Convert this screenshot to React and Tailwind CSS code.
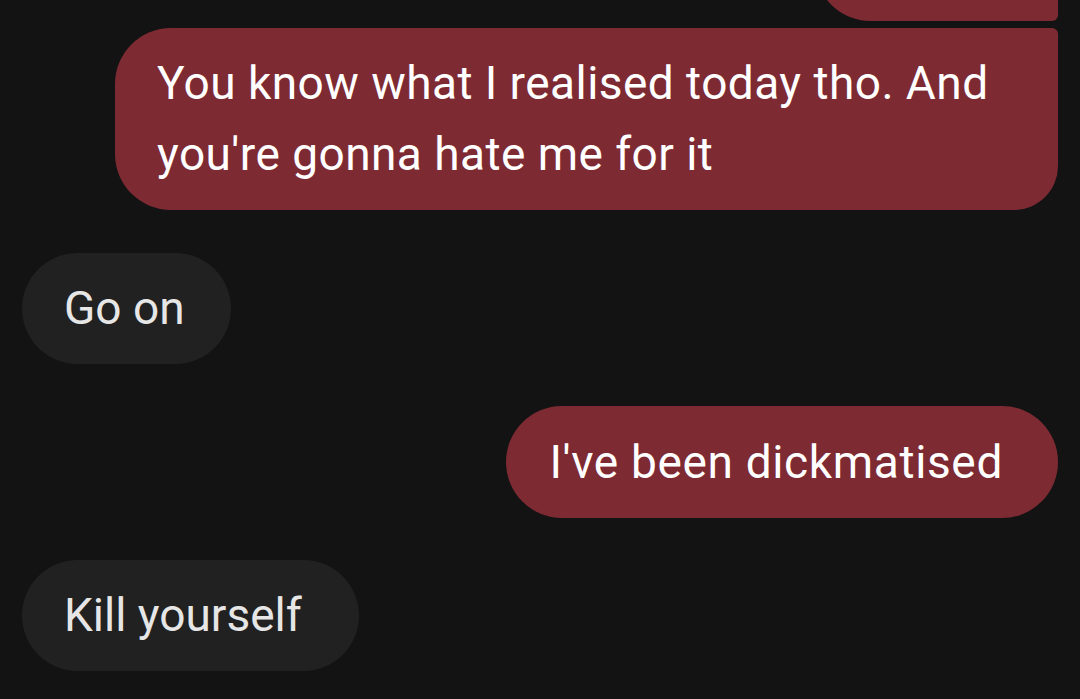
export default function App() {
  const font = { fontFamily: "Roboto, 'Noto Sans', sans-serif" };
  return (
    <div className="w-[1080px] h-[699px] overflow-hidden bg-[#131313]" style={font}>
      <div className="flex flex-col px-[22px]">
        <div className="self-end mt-[-90px] w-[243px] h-[111px] bg-[#7e2a33] rounded-tl-[56px] rounded-bl-[56px] rounded-tr-[6px] rounded-br-[6px]" />
        <div className="self-end mt-[7px] w-[943px] bg-[#7e2a33] rounded-tl-[56px] rounded-bl-[56px] rounded-br-[44px] rounded-tr-[6px] pl-[42px] pr-[40px] py-[20px] text-white text-[46px] leading-[71px] tracking-[0.45px]">
          You know what I realised today tho. And you're gonna hate me for it
        </div>
        <div className="self-start mt-[43px] bg-[#212121] rounded-full pl-[42px] pr-[46px] py-[20px] text-[#e6e6e6] text-[46px] leading-[71px]">
          Go on
        </div>
        <div className="self-end mt-[42px] bg-[#7e2a33] rounded-full pl-[43px] pr-[55px] py-[20px] text-white text-[46px] leading-[72px] tracking-[0.65px]">
          I've been dickmatised
        </div>
        <div className="self-start mt-[42px] bg-[#212121] rounded-full pl-[42px] pr-[57px] py-[20px] text-[#e6e6e6] text-[46px] leading-[71px]">
          Kill yourself
        </div>
      </div>
    </div>
  );
}
